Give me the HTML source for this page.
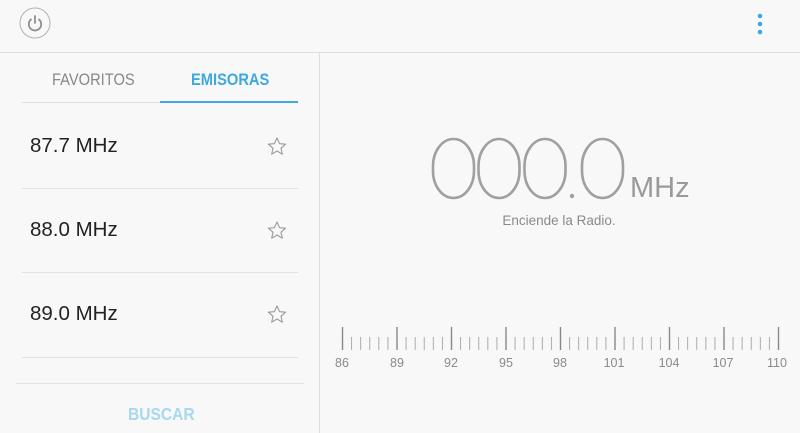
<!DOCTYPE html>
<html><head><meta charset="utf-8"><style>
body{margin:0;width:800px;height:433px;background:#f8f8f8;font-family:"Liberation Sans",sans-serif;position:relative;overflow:hidden}
.a{position:absolute}
.item{position:absolute;left:30px;font-size:20.5px;color:#222}
.sep{position:absolute;left:22px;width:276px;height:1px;background:#e2e2e2}
.c{transform:scaleX(0.89);transform-origin:0 0}
</style></head><body>
<div class="a" style="left:0;top:52px;width:800px;height:1px;background:#dedede"></div>
<div class="a" style="left:319px;top:53px;width:1px;height:380px;background:#dedede"></div>
<svg class="a" style="left:0;top:0" width="800" height="52">
<circle cx="35" cy="23" r="15" fill="none" stroke="#b0b0b0" stroke-width="1"/>
<path d="M31 19.5 A6.2 6.2 0 1 0 39 19.5" fill="none" stroke="#8f8f8f" stroke-width="1.8" stroke-linecap="round"/>
<line x1="35" y1="16" x2="35" y2="23" stroke="#8f8f8f" stroke-width="1.8" stroke-linecap="round"/>
<circle cx="760" cy="16" r="2.3" fill="#3ea8e0"/><circle cx="760" cy="24" r="2.3" fill="#3ea8e0"/><circle cx="760" cy="32" r="2.3" fill="#3ea8e0"/>
</svg>
<div class="a c" style="left:52px;top:71px;font-size:16.5px;color:#888">FAVORITOS</div>
<div class="a c" style="left:191px;top:71px;font-size:16.5px;font-weight:bold;color:#3ea8e0">EMISORAS</div>
<div class="a" style="left:22px;top:102px;width:276px;height:1px;background:#ddd"></div>
<div class="a" style="left:160px;top:101px;width:138px;height:2px;background:#3ea8e0"></div>
<div class="item" style="top:134px">87.7 MHz</div>
<div class="item" style="top:218px">88.0 MHz</div>
<div class="item" style="top:302px">89.0 MHz</div>
<div class="sep" style="top:188px"></div><div class="sep" style="top:272px"></div><div class="sep" style="top:357px"></div>
<svg class="a" style="left:0;top:0" width="320" height="433">
<defs><path id="st" d="M0,-9 L2.6,-3.3 8.6,-2.8 4,1.2 5.3,7.2 0,4 -5.3,7.2 -4,1.2 -8.6,-2.8 -2.6,-3.3Z" fill="none" stroke="#999" stroke-width="1.1" stroke-linejoin="round"/></defs>
<use href="#st" x="277" y="147"/><use href="#st" x="277" y="231"/><use href="#st" x="277" y="315"/>
</svg>
<div class="a" style="left:16px;top:383px;width:288px;height:1px;background:#e2e2e2"></div>
<div class="a c" style="left:128px;top:404px;font-size:17.5px;font-weight:bold;color:#a8d8ef">BUSCAR</div>
<svg class="a" style="left:320px;top:120px" width="480" height="260">
<g fill="none" stroke="#a0a0a0" stroke-width="2.6">
<rect x="113" y="19" width="41" height="59" rx="20.5" ry="27"/>
<rect x="158.5" y="19" width="41" height="59" rx="20.5" ry="27"/>
<rect x="204.5" y="19" width="41" height="59" rx="20.5" ry="27"/>
<rect x="262" y="19" width="41" height="59" rx="20.5" ry="27"/>
</g>
<circle cx="252" cy="76" r="2.2" fill="#a0a0a0"/>
<text x="310" y="77" font-size="29" fill="#9a9a9a" font-family="Liberation Sans">MHz</text>
<text x="239" y="105" font-size="13.5" fill="#8a8a8a" text-anchor="middle" font-family="Liberation Sans">Enciende la Radio.</text>
</svg>
<svg class="a" style="left:0;top:0" width="800" height="433">
<defs><pattern id="mn" x="342" y="0" width="9.0833" height="433" patternUnits="userSpaceOnUse"><rect x="0" y="0" width="1" height="433" fill="#aaa"/></pattern></defs>
<rect x="342" y="337" width="437" height="13" fill="url(#mn)"/>
<g stroke="#888" stroke-width="1.4">
<line x1="342.5" y1="327" x2="342.5" y2="350"/><line x1="397" y1="327" x2="397" y2="350"/><line x1="451.5" y1="327" x2="451.5" y2="350"/><line x1="506" y1="327" x2="506" y2="350"/><line x1="560.5" y1="327" x2="560.5" y2="350"/><line x1="615" y1="327" x2="615" y2="350"/><line x1="669.5" y1="327" x2="669.5" y2="350"/><line x1="724" y1="327" x2="724" y2="350"/><line x1="778.5" y1="327" x2="778.5" y2="350"/>
</g>
<g font-size="12.5" fill="#8a8a8a" text-anchor="middle" font-family="Liberation Sans">
<text x="342" y="367">86</text><text x="397" y="367">89</text><text x="451" y="367">92</text><text x="506" y="367">95</text><text x="560" y="367">98</text><text x="614" y="367">101</text><text x="669" y="367">104</text><text x="723" y="367">107</text><text x="777" y="367">110</text>
</g>
</svg>
</body></html>
